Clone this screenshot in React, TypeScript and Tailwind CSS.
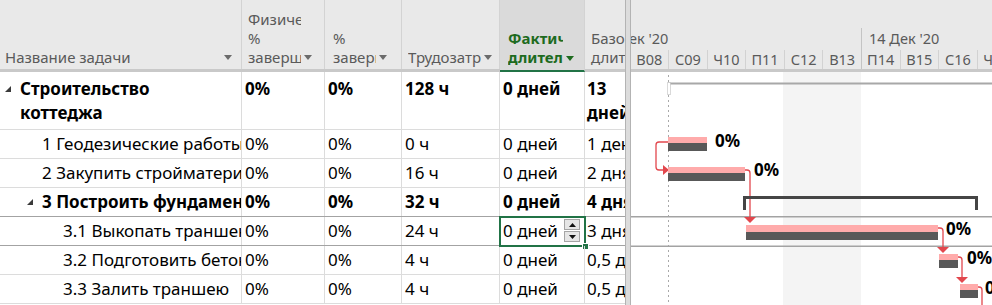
import React from "react";

type Task = {
  name: string;
  level: 0 | 1 | 2;
  summary?: boolean;
  work: string;
  base: string;
  tall?: boolean;
  edit?: boolean;
  dark?: boolean;
};

const tasks: Task[] = [
  { name: "Строительство коттеджа", level: 0, summary: true, work: "128 ч", base: "13 дней", tall: true },
  { name: "1 Геодезические работы", level: 1, work: "0 ч", base: "1 день" },
  { name: "2 Закупить стройматериалы", level: 1, work: "16 ч", base: "2 дня" },
  { name: "3 Построить фундамент", level: 1, summary: true, work: "32 ч", base: "4 дня", dark: true },
  { name: "3.1 Выкопать траншею", level: 2, work: "24 ч", base: "3 дня", edit: true, dark: true },
  { name: "3.2 Подготовить бетон", level: 2, work: "4 ч", base: "0,5 дня" },
  { name: "3.3 Залить траншею", level: 2, work: "4 ч", base: "0,5 дня" },
];

const days = ["П07", "В08", "С09", "Ч10", "П11", "С12", "В13", "П14", "В15", "С16", "Ч17"];

const Toggle = () => (
  <svg width="6" height="6" viewBox="0 0 6 6" className="shrink-0">
    <path d="M6 0V6H0Z" fill="#3a3a3a" />
  </svg>
);

const Caret = ({ color = "#6b6b6b" }: { color?: string }) => (
  <svg width="8" height="5" viewBox="0 0 8 5" className="shrink-0 mb-[7px] ml-[3px]">
    <path d="M0 0H8L4 5Z" fill={color} />
  </svg>
);

function Header() {
  return (
    <div className="flex h-[72px] bg-[#e9e9e9] border-b-[3px] border-[#c9c9c9] text-[15px] leading-[19px] text-[#5a5a5a]">
      <div className="w-[242px] flex items-end justify-between pl-[5px] pr-[9px] pb-[2px] border-r border-[#d3d3d3]">
        <span className="whitespace-nowrap">Название задачи</span>
        <Caret />
      </div>
      <div className="w-[83px] flex items-end pl-[6px] pr-[12px] pb-[2px] border-r border-[#d3d3d3]">
        <div className="flex-1 min-w-0 overflow-hidden whitespace-nowrap">
          <div>Физический</div>
          <div>%</div>
          <div>завершения</div>
        </div>
        <Caret />
      </div>
      <div className="w-[77px] flex items-end pl-[8px] pr-[14px] pb-[2px] border-r border-[#d3d3d3]">
        <div className="flex-1 min-w-0 overflow-hidden whitespace-nowrap">
          <div>%</div>
          <div>завершения</div>
        </div>
        <Caret />
      </div>
      <div className="w-[98px] flex items-end pl-[6px] pr-[7px] pb-[2px] border-r border-[#d3d3d3]">
        <div className="flex-1 min-w-0 overflow-hidden whitespace-nowrap">Трудозатраты</div>
        <Caret />
      </div>
      <div className="w-[85px] flex items-end pl-[8px] pr-[10px] pb-[2px] bg-[#dadada] border-r border-[#d3d3d3] border-b-2 border-b-[#217346] -mb-[3px] font-bold text-[#1e6b1e]">
        <div className="flex-1 min-w-0 overflow-hidden whitespace-nowrap pb-[1px]">
          <div>Фактическая</div>
          <div>длительность</div>
        </div>
        <Caret color="#1e6b1e" />
      </div>
      <div className="w-[40px] flex items-end pl-[6px] pb-[2px] overflow-hidden whitespace-nowrap">
        <div>
          <div>Базовая</div>
          <div>длительность</div>
        </div>
      </div>
    </div>
  );
}

function Row({ t }: { t: Task }) {
  const h = t.tall ? "h-[58px]" : "h-[29px]";
  const line = t.dark ? "border-b-[1.5px] border-[#a3a3a3]" : "border-b border-[#dcdcdc]";
  const align = t.tall ? "items-start pt-[5px]" : "items-center";
  const weight = t.summary ? "font-bold" : "";
  const cell = `flex ${align} pl-[3px] border-r border-[#dcdcdc] overflow-hidden whitespace-nowrap`;
  const indent =
    t.level === 0 ? "pl-[5px] gap-[9px]" : t.summary ? "pl-[27px] gap-[9px]" : t.level === 1 ? "pl-[42px]" : "pl-[63px]";
  return (
    <div className={`flex ${h} ${line} ${weight} bg-white`}>
      <div className={`w-[242px] flex ${align} ${indent} border-r border-[#dcdcdc] overflow-hidden whitespace-nowrap`}>
        {t.summary && (
          <span className={t.tall ? "pt-[9px]" : ""}>
            <Toggle />
          </span>
        )}
        {t.tall ? (
          <span>
            Строительство
            <br />
            коттеджа
          </span>
        ) : (
          <span>{t.name}</span>
        )}
      </div>
      <div className={`w-[83px] ${cell}`}>0%</div>
      <div className={`w-[77px] ${cell}`}>0%</div>
      <div className={`w-[98px] ${cell}`}>{t.work}</div>
      <div className={`w-[85px] ${cell} relative overflow-visible`}>
        0 дней
        {t.edit && (
          <div className="absolute left-[-1px] right-[-2px] top-[-1px] bottom-[-2px] border-2 border-[#217346]">
            <div className="absolute right-[4px] top-[1px] flex flex-col gap-px">
              <div className="w-[16px] h-[11px] bg-[#e6e6e6] border border-[#a5a5a5] flex items-center justify-center">
                <svg width="7" height="4" viewBox="0 0 7 4"><path d="M0 4L3.5 0L7 4Z" fill="#111" /></svg>
              </div>
              <div className="w-[16px] h-[11px] bg-[#e6e6e6] border border-[#a5a5a5] flex items-center justify-center">
                <svg width="7" height="4" viewBox="0 0 7 4"><path d="M0 0L3.5 4L7 0Z" fill="#111" /></svg>
              </div>
            </div>
            <div className="absolute right-[-5px] bottom-[-5px] w-[7px] h-[7px] bg-[#217346] border border-white" />
          </div>
        )}
      </div>
      <div className={`w-[40px] flex ${align} pl-[2px] overflow-hidden ${t.tall ? "whitespace-normal" : "whitespace-nowrap"}`}>
        {t.base}
      </div>
    </div>
  );
}

function GanttHeader() {
  return (
    <div className="h-[72px] bg-[#e9e9e9] border-b-[3px] border-[#c9c9c9] text-[14.5px] text-[#5a5a5a] overflow-hidden whitespace-nowrap">
      <div className="flex -ml-[40px] mt-[28px] h-[22px]">
        <div className="w-[270px] shrink-0 pl-[7px] leading-[20px]">07 Дек '20</div>
        <div className="w-[270px] shrink-0 pl-[7px] leading-[20px] border-l border-[#c4c4c4]">14 Дек '20</div>
      </div>
      <div className="flex -ml-[40px] h-[19px]">
        {days.map((d, i) => (
          <div
            key={d}
            className={`w-[38.57px] shrink-0 text-center leading-[19px] border-l ${i === 7 ? "border-[#c4c4c4]" : "border-[#d2d2d2]"}`}
          >
            {d}
          </div>
        ))}
      </div>
    </div>
  );
}

const Pct = ({ left, top }: { left: string; top: string }) => (
  <span className={`absolute ${left} ${top} font-bold leading-[20px]`}>0%</span>
);

function GanttBody() {
  const red = "#e2474d";
  const pink = "#ffabab";
  const dark = "#585858";
  return (
    <div className="relative flex-1 bg-white overflow-hidden">
      <svg className="absolute inset-0" width="361" height="233" viewBox="0 0 361 233">
        <rect x="152" y="0" width="78" height="233" fill="#f4f4f4" />
        <line x1="37.5" y1="3" x2="37.5" y2="233" stroke="#a9a9a9" strokeDasharray="2 3" />
        <rect x="37" y="10.5" width="324" height="2" fill="#a8a8a8" />
        <rect x="36.5" y="10.5" width="3" height="12" fill="#fff" stroke="#b2b2b2" strokeDasharray="1 1" />
        <rect x="0" y="144" width="361" height="1.5" fill="#a3a3a3" />
        <rect x="0" y="173.5" width="361" height="1.5" fill="#a3a3a3" />

        <path d="M37 70H28Q25 70 25 73V95Q25 98 28 98H32" fill="none" stroke={red} strokeWidth="1.3" />
        <path d="M32 93L38 98L32 103Z" fill={red} />
        <path d="M114 98H116Q119 98 119 101V145" fill="none" stroke={red} strokeWidth="1.3" />
        <path d="M113 145H125L119 151Z" fill={red} />
        <path d="M307 156H309Q312 156 312 159V175" fill="none" stroke={red} strokeWidth="1.3" />
        <path d="M306 175H318L312 181Z" fill={red} />
        <path d="M327 185H328Q331 185 331 188V205" fill="none" stroke={red} strokeWidth="1.3" />
        <path d="M325 205H337L331 211Z" fill={red} />
        <path d="M347 215H348Q351 215 351 218V233" fill="none" stroke={red} strokeWidth="1.3" />

        <rect x="37" y="65" width="39" height="6" fill={pink} />
        <rect x="37" y="71" width="39" height="8" fill={dark} />
        <rect x="37" y="95" width="77" height="6" fill={pink} />
        <rect x="37" y="101" width="77" height="8" fill={dark} />

        <path d="M112 124H347V138H344V127H115V138H112Z" fill="#454545" />

        <rect x="115" y="153" width="192" height="7" fill={pink} />
        <rect x="115" y="160" width="192" height="8" fill={dark} />
        <rect x="308" y="182" width="19" height="6" fill={pink} />
        <rect x="308" y="188" width="19" height="8" fill={dark} />
        <rect x="329" y="212" width="18" height="6" fill={pink} />
        <rect x="329" y="218" width="18" height="8" fill={dark} />
      </svg>
      <Pct left="left-[84px]" top="top-[59px]" />
      <Pct left="left-[123px]" top="top-[88px]" />
      <Pct left="left-[315px]" top="top-[147px]" />
      <Pct left="left-[336px]" top="top-[176px]" />
      <Pct left="left-[354px]" top="top-[206px]" />
    </div>
  );
}

export default function App() {
  return (
    <div className="w-[992px] h-[305px] overflow-hidden flex bg-white text-black font-['Noto_Sans',sans-serif]">
      <div className="w-[625px] shrink-0 flex flex-col text-[17px] leading-[24px]">
        <Header />
        {tasks.map((t) => (
          <Row key={t.name} t={t} />
        ))}
      </div>
      <div className="w-[6px] shrink-0 bg-[#dcdcdc] border-x border-[#b3b3b3]" />
      <div className="flex-1 flex flex-col text-[17px]">
        <GanttHeader />
        <GanttBody />
      </div>
    </div>
  );
}
